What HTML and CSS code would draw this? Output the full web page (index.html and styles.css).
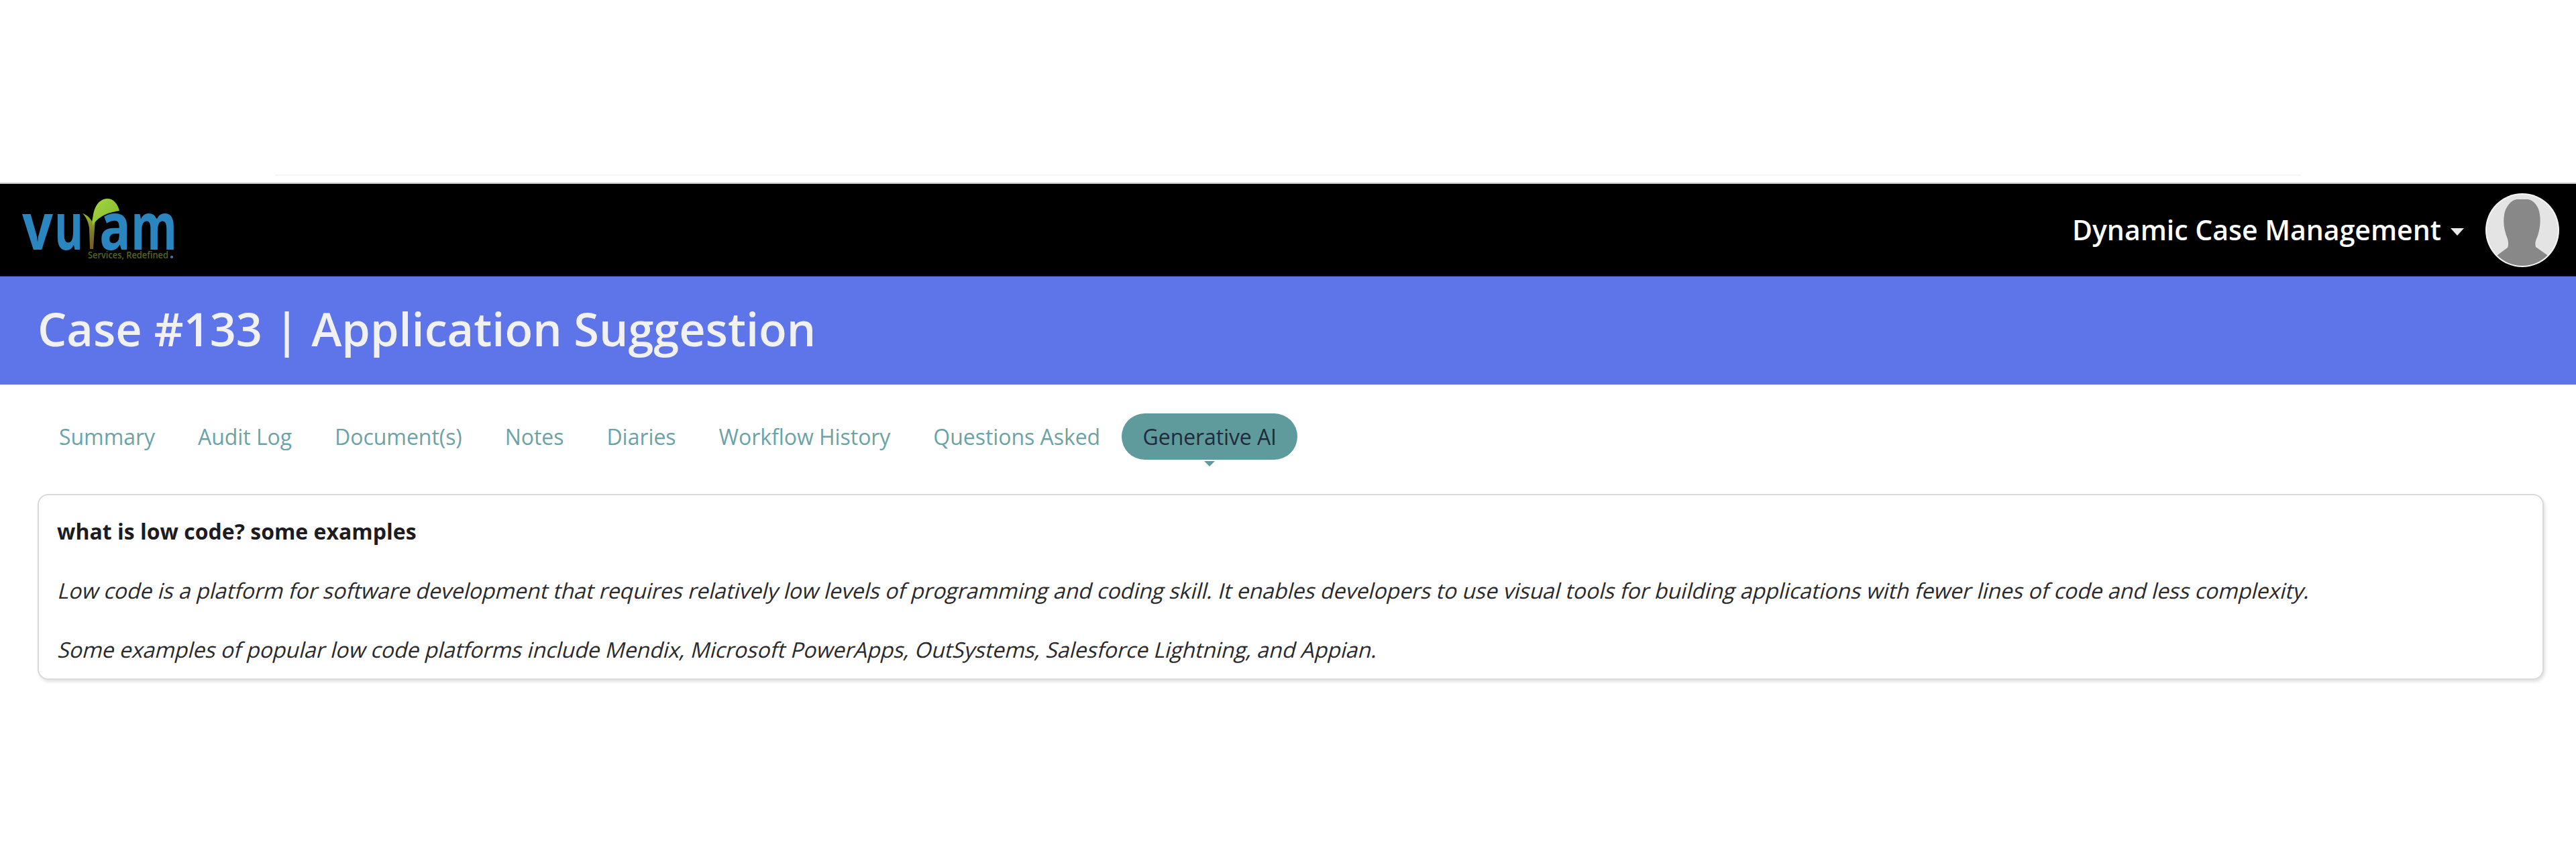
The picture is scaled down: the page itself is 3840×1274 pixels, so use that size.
FILE: index.html
```html
<!DOCTYPE html>
<html lang="en">
<head>
<meta charset="utf-8">
<title>Case #133 | Application Suggestion</title>
<link rel="stylesheet" href="styles.css">
</head>
<body>
<div class="top-space"><div class="top-strip"></div></div>
<header class="navbar">
  <svg class="logo" width="270" height="137" viewBox="0 0 270 137" aria-label="vuram">
    <defs>
      <linearGradient id="stem" x1="0" y1="0" x2="0" y2="1"><stop offset="0" stop-color="#9dbb34"/><stop offset=".55" stop-color="#7d7a2a"/><stop offset="1" stop-color="#7a5a26"/></linearGradient>
      <linearGradient id="leaf" x1="0" y1="0" x2="1" y2="1"><stop offset="0" stop-color="#a9d63f"/><stop offset="1" stop-color="#7cb82c"/></linearGradient>
    </defs>
    <text class="logo-word" x="33" y="98" textLength="46" lengthAdjust="spacingAndGlyphs">v</text>
    <text class="logo-word" x="81" y="98" textLength="43" lengthAdjust="spacingAndGlyphs">u</text>
    <text class="logo-word" x="148" y="98" textLength="47" lengthAdjust="spacingAndGlyphs">a</text>
    <text class="logo-word" x="195" y="98" textLength="69" lengthAdjust="spacingAndGlyphs">m</text>
    <path d="M134 97 L133 66 C132 58 129 50 123 44 C129 46 134 50 137 56 C138 50 140 46 143 42 L141 66 L139 97 Z" fill="url(#stem)"/>
    <path d="M138 62 C137 38 146 22 160 22 C169 22 175 29 178 40 C166 42 148 46 138 62 Z" fill="url(#leaf)"/>
    <text class="logo-tag" x="131" y="111" textLength="120" lengthAdjust="spacingAndGlyphs">Services, Redefined</text>
    <circle cx="256" cy="109" r="2" fill="#2b86c0"/>
  </svg>
  <div class="nav-right">
    <span class="nav-title">Dynamic Case Management</span>
    <span class="nav-caret"></span>
    <svg class="avatar" width="110" height="110" viewBox="0 0 110 110">
      <defs><clipPath id="round"><circle cx="55" cy="55" r="53"/></clipPath></defs>
      <circle cx="55" cy="55" r="55" fill="#f4f4f4"/>
      <circle cx="55" cy="55" r="53" fill="#e4e4e4"/>
      <g clip-path="url(#round)">
        <path d="M47 9 L63 9 C72 10 80 20 81 32 C83 44 80 60 76 68 C74 73 74 76 75 80 L92 92 L92 112 L18 112 L18 92 L33 81 C35 77 34 73 33 68 C28 56 26 44 28 32 C30 20 38 10 47 9 Z" fill="#888888"/>
      </g>
    </svg>
  </div>
</header>
<section class="case-bar"><h1 class="case-title">Case #133 | Application Suggestion</h1></section>
<nav class="tabs">
  <a class="tab">Summary</a>
  <a class="tab">Audit Log</a>
  <a class="tab">Document(s)</a>
  <a class="tab">Notes</a>
  <a class="tab">Diaries</a>
  <a class="tab">Workflow History</a>
  <a class="tab">Questions Asked</a>
  <a class="tab tab-active">Generative AI</a>
</nav>
<main class="card">
  <p class="question">what is low code? some examples</p>
  <p class="answer">Low code is a platform for software development that requires relatively low levels of programming and coding skill. It enables developers to use visual tools for building applications with fewer lines of code and less complexity.</p>
  <p class="answer">Some examples of popular low code platforms include Mendix, Microsoft PowerApps, OutSystems, Salesforce Lightning, and Appian.</p>
</main>
</body>
</html>
```
FILE: styles.css
```css
* { box-sizing: border-box; }
html, body { margin: 0; padding: 0; background: #fff; }
body { font-family: "Open Sans", "Liberation Sans", sans-serif; color: #212529; min-height: 1274px; overflow: hidden; }
.top-space { display: flow-root; height: 274px; padding: 0 410px; border-bottom: 2px solid #c8c8c8; }
.top-strip { height: 2px; background: #f5f5f5; margin-top: 260px; }
.navbar { height: 138px; background: #000; display: flex; align-items: center; justify-content: space-between; border-bottom: 1px solid #23263a; }
.logo { display: block; flex: none; }
.logo-word { font-family: "Open Sans", sans-serif; font-weight: 700; font-size: 96px; fill: #2b86c0; }
.logo-tag { font-family: "Open Sans", sans-serif; font-weight: 600; font-size: 14px; fill: #55651f; }
.nav-right { display: flex; align-items: center; padding-right: 25px; }
.nav-title { color: #fff; font-size: 41px; font-weight: 600; line-height: 1; }
.nav-caret { width: 0; height: 0; margin: 6px 32px 0 14px; border-left: 10px solid transparent; border-right: 10px solid transparent; border-top: 11px solid #e8e8e8; }
.avatar { display: block; flex: none; }
.case-bar { height: 161px; background: #5e75ea; display: flex; align-items: center; padding: 0 0 4px 56px; }
.case-title { margin: 0; color: #f1f1f1; font-size: 68.4px; font-weight: 600; line-height: 1; }
.tabs { display: flex; align-items: center; padding: 43px 0 0 56px; height: 112px; }
.tab { display: block; height: 69px; line-height: 69px; padding: 0 32px; border-radius: 35px; color: #6ba3a6; font-size: 32px; font-weight: 400; letter-spacing: -0.05px; white-space: nowrap; position: relative; }
.tab-active { background: #5f9a9d; color: #212b3b; letter-spacing: -0.1px; padding: 0 31.5px; }
.tab-active::after { content: ""; position: absolute; left: 50%; top: 71px; margin-left: -8px; width: 0; height: 0; border-left: 8px solid transparent; border-right: 8px solid transparent; border-top: 8px solid #5f9a9d; }
.card { margin: 51px 48px 0 56px; height: 277px; padding: 32px 27px 0; border: 2px solid #d9d9d9; border-radius: 16px; background: #fff; box-shadow: 2px 3px 5px rgba(0,0,0,.12); }
.question { margin: 0; font-size: 32px; font-weight: 700; line-height: 44px; color: #1c1c22; }
.answer { margin: 44px 0 0; font-size: 32px; font-weight: 400; letter-spacing: -0.035px; line-height: 44px; color: #2a2a2e; white-space: nowrap; transform: skewX(-14deg); transform-origin: 0 75%; }
```
